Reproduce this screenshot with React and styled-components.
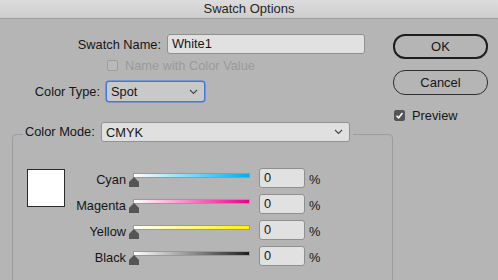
import React from 'react';
import styled, { createGlobalStyle } from 'styled-components';

const GlobalStyle = createGlobalStyle`
  html, body { margin: 0; padding: 0; }
  body {
    background: #b5b5b5;
    font-family: "Liberation Sans", Arial, sans-serif;
    font-size: 12.8px;
    color: #161616;
  }
`;

const Window = styled.div`
  width: 498px;
  height: 280px;
  overflow: hidden;
  background: #b5b5b5;
`;

const TitleBar = styled.div`
  height: 18px;
  border-bottom: 1px solid #9d9d9d;
  background: linear-gradient(#dcdcdc, #cdcdcd);
  text-align: center;
  font-size: 13px;
  line-height: 17px;
  color: #262626;
`;

const Body = styled.div`
  display: flex;
`;

const Main = styled.div`
  width: 393px;
  padding-top: 15px;
`;

const Side = styled.div`
  display: flex;
  flex-direction: column;
  padding-top: 15px;
`;

const Row = styled.div`
  display: flex;
  align-items: center;
  height: ${p => p.$h || 20}px;
  margin-top: ${p => p.$top || 0}px;
  padding-left: ${p => p.$indent || 0}px;
`;

const Label = styled.label`
  width: ${p => p.$w}px;
  text-align: right;
  white-space: nowrap;
  margin-right: ${p => p.$gap ?? 6}px;
`;

const TextInput = styled.div`
  box-sizing: border-box;
  width: ${p => p.$w}px;
  height: 20px;
  margin-left: ${p => p.$left || 0}px;
  background: #e1e1e1;
  border: 1px solid #8f8f8f;
  border-radius: 3px;
  padding-left: 4px;
  line-height: 18px;
`;

const Select = styled.div`
  box-sizing: border-box;
  display: flex;
  align-items: center;
  justify-content: space-between;
  width: ${p => p.$w}px;
  height: ${p => p.$h || 20}px;
  padding: 0 6px 0 4px;
  border-radius: 3px;
  background: ${p => (p.$focus ? '#c9c9c9' : '#e0e0e0')};
  border: 1px solid ${p => (p.$focus ? '#3b7be0' : '#939393')};
  box-shadow: ${p => (p.$focus ? '0 0 0 0.5px #3b7be0' : 'none')};
`;

const Box = styled.span`
  box-sizing: border-box;
  display: inline-flex;
  align-items: center;
  justify-content: center;
  width: 11px;
  height: 11px;
  border-radius: 2px;
  border: 1px solid ${p => (p.$checked ? '#555' : '#9d9d9d')};
  background: ${p => (p.$checked ? '#555' : '#b9b9b9')};
  margin-right: 7px;
`;

const Muted = styled.span`
  color: #9a9a9a;
`;

const Group = styled.fieldset`
  margin: 20px 0 0 12px;
  padding: 0;
  height: 200px;
  border: 1px solid #9c9c9c;
  border-radius: 4px;
`;

const Legend = styled.legend`
  display: flex;
  align-items: flex-start;
  margin-left: 10px;
  padding: 0 3px 4px 2px;
`;

const LegendLabel = styled.span`
  width: 71px;
  white-space: nowrap;
  line-height: 20px;
  margin-right: 5px;
`;

const GroupBody = styled.div`
  display: flex;
  padding: 22px 0 0 14px;
`;

const Swatch = styled.div`
  width: 36px;
  height: 36px;
  margin-top: 1px;
  background: #fff;
  border: 1px solid #2a2a2a;
`;

const Sliders = styled.div`
  display: flex;
  flex-direction: column;
  gap: 6px;
`;

const InkLabel = styled.span`
  width: 61px;
  text-align: right;
  padding-top: 3px;
`;

const Slider = styled.div`
  position: relative;
  width: 121px;
  height: 20px;
  margin-left: 3px;
`;

const Track = styled.div`
  box-sizing: border-box;
  margin: 5px 0 0 4px;
  width: 117px;
  height: 5px;
  border: 1px solid #9a9a9a;
  background: linear-gradient(to right, #fff, ${p => p.$ink});
`;

const Thumb = styled.svg`
  position: absolute;
  left: 0;
  top: 9px;
`;

const Percent = styled.span`
  margin-left: 4px;
  padding-top: 3px;
`;

const Button = styled.div`
  box-sizing: border-box;
  width: 95px;
  height: 25px;
  margin-top: ${p => p.$top || 0}px;
  border: ${p => (p.$primary ? '2px solid #1e1e1e' : '1px solid #2e2e2e')};
  border-radius: 12px;
  display: flex;
  align-items: center;
  justify-content: center;
  font-size: 13px;
`;

const Check = () => (
  <svg width="9" height="9" viewBox="0 0 9 9">
    <polyline points="1.5,4.8 3.6,6.8 7.5,2" fill="none" stroke="#fff" strokeWidth="1.5" />
  </svg>
);

const Chevron = () => (
  <svg width="9" height="6" viewBox="0 0 9 6">
    <polyline points="1,1 4.5,4.5 8,1" fill="none" stroke="#444" strokeWidth="1.1" />
  </svg>
);

const inks = [
  { name: 'Cyan', color: '#00aeef' },
  { name: 'Magenta', color: '#ec008c' },
  { name: 'Yellow', color: '#fff200' },
  { name: 'Black', color: '#231f20' },
];

export default function App() {
  return (
    <Window>
      <GlobalStyle />
      <TitleBar>Swatch Options</TitleBar>
      <Body>
        <Main>
          <Row>
            <Label $w={161}>Swatch Name:</Label>
            <TextInput $w={198}>White1</TextInput>
          </Row>
          <Row $top={6} $h={11} $indent={107}>
            <Box />
            <Muted>Name with Color Value</Muted>
          </Row>
          <Row $top={10} $h={21}>
            <Label $w={100}>Color Type:</Label>
            <Select $w={99} $h={21} $focus>
              Spot
              <Chevron />
            </Select>
          </Row>
          <Group>
            <Legend>
              <LegendLabel>Color Mode:</LegendLabel>
              <Select $w={249}>
                CMYK
                <Chevron />
              </Select>
            </Legend>
            <GroupBody>
              <Swatch />
              <Sliders>
                {inks.map(ink => (
                  <Row key={ink.name} $h={20}>
                    <InkLabel>{ink.name}</InkLabel>
                    <Slider>
                      <Track $ink={ink.color} />
                      <Thumb width="10" height="10" viewBox="0 0 10 10">
                        <polygon points="5,0 10,5 10,10 0,10 0,5" fill="#555" />
                      </Thumb>
                    </Slider>
                    <TextInput $w={46} $left={9}>0</TextInput>
                    <Percent>%</Percent>
                  </Row>
                ))}
              </Sliders>
            </GroupBody>
          </Group>
        </Main>
        <Side>
          <Button $primary>OK</Button>
          <Button $top={11}>Cancel</Button>
          <Row $top={15} $h={11} $indent={1}>
            <Box $checked>
              <Check />
            </Box>
            Preview
          </Row>
        </Side>
      </Body>
    </Window>
  );
}
